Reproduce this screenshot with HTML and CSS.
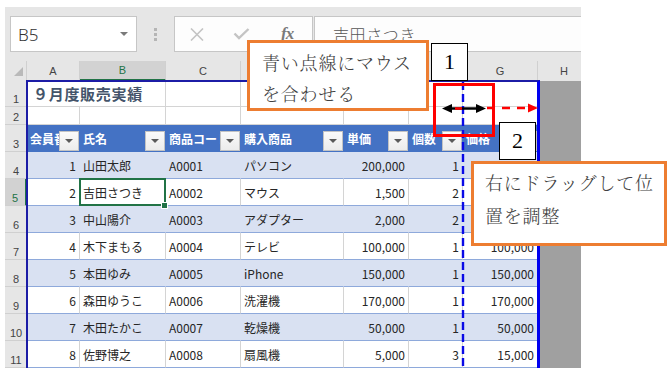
FILE: index.html
```html
<!DOCTYPE html>
<html lang="ja">
<head>
  <meta charset="UTF-8">
  <meta name="viewport" content="width=device-width, initial-scale=1.0">
  <title>列幅の調整</title>
  <link rel="stylesheet" href="styles.css">
</head>
<body>
  <div class="stage">
    <div class="excel">
      <div class="toolbar">
        <div class="namebox"><span>B5</span><span class="caret"></span></div>
        <div class="grip"><i></i><i></i><i></i></div>
        <div class="fxbox">
          <svg class="ico-x" width="14" height="13" viewBox="0 0 14 13"><path d="M1 0.5 L13 12.5 M13 0.5 L1 12.5" stroke="#c4c4c4" stroke-width="1.6" fill="none"/></svg>
          <svg class="ico-ok" width="17" height="12" viewBox="0 0 17 12"><path d="M1.5 5.5 L6 10 L15.5 1" stroke="#c4c4c4" stroke-width="2.4" fill="none"/></svg>
          <span class="fx">fx</span>
        </div>
        <div class="formula">吉田さつき</div>
      </div>

      <div class="sheet">
        <div class="corner"><svg width="22" height="20"><polygon points="18,6 18,15 9,15" fill="#b9b9b9"/></svg></div>
        <div class="ch">A</div>
        <div class="ch sel">B</div>
        <div class="ch">C</div>
        <div class="ch">D</div>
        <div class="ch">E</div>
        <div class="ch">F</div>
        <div class="ch">G</div>
        <div class="ch colh">H</div>

        <div class="rh">1</div>
        <div class="c title">９月度販売実績</div>
        <div class="c"></div><div class="c"></div><div class="c"></div><div class="c"></div><div class="c"></div><div class="c"></div>
        <div class="gray"></div>

        <div class="rh">2</div>
        <div class="c"></div><div class="c"></div><div class="c"></div><div class="c"></div><div class="c"></div><div class="c"></div><div class="c"></div>
        <div class="gray"></div>

        <div class="rh">3</div>
        <div class="th"><span>会員番号</span><b class="fbtn"></b></div>
        <div class="th"><span>氏名</span><b class="fbtn"></b></div>
        <div class="th"><span>商品コード</span><b class="fbtn"></b></div>
        <div class="th"><span>購入商品</span><b class="fbtn"></b></div>
        <div class="th"><span>単価</span><b class="fbtn"></b></div>
        <div class="th"><span>個数</span><b class="fbtn"></b></div>
        <div class="th"><span>価格</span><b class="fbtn"></b></div>
        <div class="gray"></div>

        <div class="tr band">
          <div class="rh">4</div>
          <div class="d num">1</div><div class="d">山田太郎</div><div class="d">A0001</div><div class="d">パソコン</div>
          <div class="d num">200,000</div><div class="d num">1</div><div class="d num">200,000</div>
          <div class="gray"></div>
        </div>
        <div class="tr">
          <div class="rh sel">5</div>
          <div class="d num">2</div><div class="d cur">吉田さつき</div><div class="d">A0002</div><div class="d">マウス</div>
          <div class="d num">1,500</div><div class="d num">2</div><div class="d num">3,000</div>
          <div class="gray"></div>
        </div>
        <div class="tr band">
          <div class="rh">6</div>
          <div class="d num">3</div><div class="d">中山陽介</div><div class="d">A0003</div><div class="d">アダプター</div>
          <div class="d num">2,000</div><div class="d num">2</div><div class="d num">4,000</div>
          <div class="gray"></div>
        </div>
        <div class="tr">
          <div class="rh">7</div>
          <div class="d num">4</div><div class="d">木下まもる</div><div class="d">A0004</div><div class="d">テレビ</div>
          <div class="d num">100,000</div><div class="d num">1</div><div class="d num">100,000</div>
          <div class="gray"></div>
        </div>
        <div class="tr band">
          <div class="rh">8</div>
          <div class="d num">5</div><div class="d">本田ゆみ</div><div class="d">A0005</div><div class="d">iPhone</div>
          <div class="d num">150,000</div><div class="d num">1</div><div class="d num">150,000</div>
          <div class="gray"></div>
        </div>
        <div class="tr">
          <div class="rh">9</div>
          <div class="d num">6</div><div class="d">森田ゆうこ</div><div class="d">A0006</div><div class="d">洗濯機</div>
          <div class="d num">170,000</div><div class="d num">1</div><div class="d num">170,000</div>
          <div class="gray"></div>
        </div>
        <div class="tr band">
          <div class="rh">10</div>
          <div class="d num">7</div><div class="d">木田たかこ</div><div class="d">A0007</div><div class="d">乾燥機</div>
          <div class="d num">50,000</div><div class="d num">1</div><div class="d num">50,000</div>
          <div class="gray"></div>
        </div>
        <div class="tr">
          <div class="rh">11</div>
          <div class="d num">8</div><div class="d">佐野博之</div><div class="d">A0008</div><div class="d">扇風機</div>
          <div class="d num">5,000</div><div class="d num">3</div><div class="d num">15,000</div>
          <div class="gray"></div>
        </div>
      </div>
    </div>

    <!-- annotations drawn over the sheet -->
    <div class="frame"></div>
    <svg class="marks" width="672" height="372">
      <line x1="463" y1="82" x2="463" y2="368" stroke="#0a0ae6" stroke-width="2.4" stroke-dasharray="8 4"/>
      <line x1="449" y1="108.5" x2="480" y2="108.5" stroke="#000" stroke-width="2.5"/>
      <line x1="455" y1="108.5" x2="462" y2="108.5" stroke="#ff0000" stroke-width="2.5"/>
      <polygon points="442,108.5 452,104 452,113" fill="#000"/>
      <polygon points="486,108.5 476,104 476,113" fill="#000"/>
      <line x1="487" y1="108" x2="528" y2="108" stroke="#ff0000" stroke-width="2.5" stroke-dasharray="8 7"/>
      <polygon points="538,108 528,103.5 528,112.5" fill="#ff0000"/>
    </svg>
    <div class="redbox"></div>
    <div class="tag tag1">1</div>
    <div class="tag tag2">2</div>
    <div class="callout call1">青い点線にマウス<br>を合わせる</div>
    <div class="callout call2">右にドラッグして位<br>置を調整</div>
  </div>
</body>
</html>
```

FILE: styles.css
```css
body {
  margin: 0;
  background-color: #ffffff;
  font-family: "Noto Sans CJK JP", sans-serif;
}
.stage {
  position: relative;
  width: 672px;
  height: 372px;
  overflow: hidden;
}
.excel {
  margin: 7px 0 0 5px;
  width: 576px;
}

/* ツールバー */
.toolbar {
  height: 54px;
  background-color: #e6e6e6;
  display: flex;
  align-items: flex-start;
  padding-top: 9px;
  box-sizing: border-box;
}
.namebox {
  margin-left: 5px;
  width: 127px;
  height: 36px;
  box-sizing: border-box;
  border: 1px solid #c6c6c6;
  background-color: #ffffff;
  display: flex;
  align-items: center;
  justify-content: space-between;
  padding: 0 8px 0 7px;
  font-family: "Noto Sans", sans-serif;
  font-weight: 300;
  font-size: 17px;
  color: #333333;
}
.caret {
  width: 0;
  height: 0;
  border-left: 4px solid transparent;
  border-right: 4px solid transparent;
  border-top: 4px solid #7a7a7a;
}
.grip {
  width: 37px;
  height: 36px;
  display: flex;
  flex-direction: column;
  align-items: center;
  justify-content: center;
  gap: 2px;
}
.grip i {
  display: block;
  width: 3px;
  height: 3px;
  background-color: #b5b5b5;
}
.fxbox {
  width: 139px;
  height: 36px;
  box-sizing: border-box;
  border: 1px solid #c6c6c6;
  background-color: #fdfdfd;
  display: flex;
  align-items: center;
}
.ico-x {
  margin-left: 15px;
}
.ico-ok {
  margin-left: 29px;
}
.fx {
  margin-left: 31px;
  font-family: "Liberation Serif", serif;
  font-style: italic;
  font-weight: bold;
  font-size: 17px;
  color: #7a7a7a;
  letter-spacing: -1px;
}
.formula {
  flex: 1;
  height: 36px;
  margin-left: 1px;
  box-sizing: border-box;
  border: 1px solid #c6c6c6;
  border-right: none;
  background-color: #fdfdfd;
  padding-left: 18px;
  display: flex;
  align-items: center;
  font-weight: 300;
  font-size: 16px;
  letter-spacing: 0.6px;
  color: #555555;
}

/* シート */
.sheet {
  display: grid;
  grid-template-columns: 22px 53px 86px 75px 103px 65px 54px 75px 43px;
  grid-template-rows: 20px 26px 18px repeat(9, 27px);
  font-size: 12px;
  color: #262626;
  background-color: #ffffff;
}
.tr {
  display: contents;
}
.corner, .ch, .rh, .c, .th, .d {
  display: flex;
  align-items: center;
  box-sizing: border-box;
  white-space: nowrap;
  overflow: hidden;
}
.corner {
  background-color: #e6e6e6;
  border-right: 1px solid #d0d0d0;
}
.ch {
  background-color: #e6e6e6;
  border-right: 1px solid #d0d0d0;
  justify-content: center;
  font-family: "Liberation Sans", sans-serif;
  font-size: 11px;
  color: #444444;
}
.ch.sel {
  background-color: #d2d2d2;
  color: #217346;
  border-bottom: 2px solid #217346;
}
.ch.colh {
  border-right: none;
  padding-left: 9px;
}
.rh {
  background-color: #e6e6e6;
  border-bottom: 1px solid #d0d0d0;
  justify-content: center;
  align-items: flex-end;
  padding-bottom: 1px;
  font-family: "Liberation Sans", sans-serif;
  font-size: 11px;
  color: #444444;
}
.rh.sel {
  background-color: #d2d2d2;
  color: #217346;
  border-right: 2px solid #217346;
}
.c {
  border-right: 1px solid #d4d4d4;
  border-bottom: 1px solid #d4d4d4;
  padding: 0 3px;
}
.title {
  overflow: visible;
  border-right: none;
  padding-left: 6px;
  font-weight: bold;
  font-size: 15px;
  letter-spacing: 0.7px;
  color: #44546a;
}
.gray {
  background-color: #a0a0a0;
}
.th {
  background-color: #4472c4;
  color: #ffffff;
  font-weight: bold;
  padding-left: 3px;
}
.th span {
  flex: 1;
  min-width: 0;
  overflow: hidden;
}
.fbtn {
  flex: none;
  align-self: flex-end;
  position: relative;
  width: 20px;
  height: 20px;
  margin: 0 1px 1px 0;
  box-sizing: border-box;
  border: 1px solid #c3c3c3;
  background: linear-gradient(#fafafa, #ececec);
}
.fbtn::after {
  content: "";
  position: absolute;
  left: 5px;
  top: 7px;
  border-left: 4px solid transparent;
  border-right: 4px solid transparent;
  border-top: 4px solid #5a5a5a;
}
.d {
  border-right: 1px solid #d4d4d4;
  border-bottom: 1px solid #8ea9db;
  padding: 0 3px;
}
.band .d {
  background-color: #d9e1f2;
  border-right-color: transparent;
}
.num {
  justify-content: flex-end;
}
.cur {
  position: relative;
  z-index: 1;
  overflow: visible;
}
.cur::after {
  content: "";
  position: absolute;
  left: -1px;
  top: -1px;
  right: -1px;
  bottom: -1px;
  border: 2px solid #217346;
}
.cur::before {
  content: "";
  position: absolute;
  right: -3px;
  bottom: -4px;
  width: 5px;
  height: 5px;
  background-color: #217346;
  border: 1px solid #ffffff;
  z-index: 2;
}

/* 注釈 */
.frame {
  position: absolute;
  left: 26px;
  top: 80px;
  width: 514px;
  height: 288px;
  box-sizing: border-box;
  border-left: 2px solid #1c1ca6;
  border-top: 2px solid #1c1ca6;
  border-right: 3px solid #0000f0;
}
.marks {
  position: absolute;
  left: 0;
  top: 0;
}
.redbox {
  position: absolute;
  left: 433px;
  top: 83px;
  width: 62px;
  height: 54px;
  box-sizing: border-box;
  border: 3px solid #ff0000;
}
.tag {
  position: absolute;
  width: 37px;
  height: 38px;
  box-sizing: border-box;
  border: 1px solid #000000;
  background-color: #ffffff;
  display: flex;
  align-items: center;
  justify-content: center;
  font-family: "Liberation Serif", serif;
  font-size: 22px;
  color: #000000;
}
.tag1 {
  left: 431px;
  top: 43px;
}
.tag2 {
  left: 499px;
  top: 122px;
}
.callout {
  position: absolute;
  box-sizing: border-box;
  border: 3px solid #ed7d31;
  background-color: #ffffff;
  font-family: "Noto Serif CJK JP", "Noto Sans CJK JP", serif;
  font-weight: 300;
  font-size: 18px;
  letter-spacing: 0.8px;
  color: #404040;
  white-space: nowrap;
}
.call1 {
  left: 247px;
  top: 40px;
  width: 182px;
  height: 71px;
  padding: 4px 0 0 12px;
  line-height: 31px;
}
.call2 {
  left: 471px;
  top: 161px;
  width: 196px;
  height: 85px;
  padding: 2px 0 0 11px;
  line-height: 33px;
}
```
